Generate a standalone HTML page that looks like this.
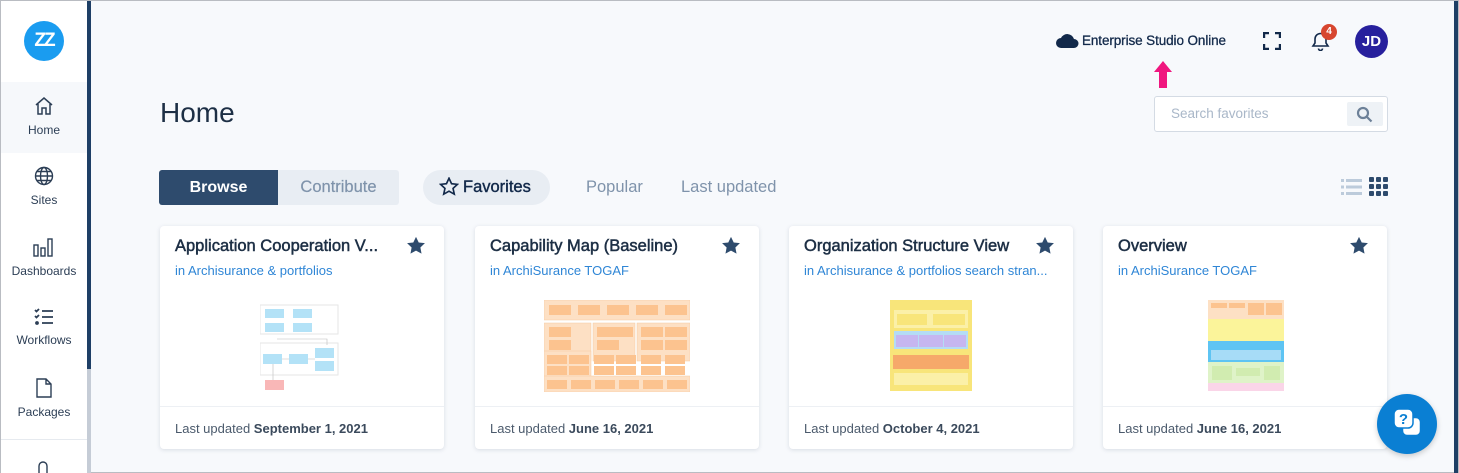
<!DOCTYPE html>
<html><head><meta charset="utf-8"><style>
*{box-sizing:border-box;margin:0;padding:0}
html{width:1459px;height:473px;overflow:hidden}
body{width:1459px;height:473px;overflow:hidden;background:#f7f9fc;font-family:"Liberation Sans",sans-serif;position:relative;border:1px solid #b9bcc2}
.side{position:absolute;left:0;top:0;width:86px;height:473px;background:#fff}
.bar{position:absolute;left:86px;top:0;width:4px;height:368px;background:#1e3f66}
.bar2{position:absolute;left:86px;top:368px;width:4px;height:110px;background:#c5ccd6}
.logo{position:absolute;left:23px;top:20px;width:40px;height:40px;border-radius:50%;background:#1a9cf0;color:#fff;font-weight:bold;font-size:19px;text-align:center;line-height:40px;letter-spacing:-2px}
.nav{position:absolute;left:0;width:86px;text-align:center;font-size:12px;color:#2c3e55}
.nav svg{display:block;margin:0 auto 7px}
.abs{position:absolute}
.card{position:absolute;top:225px;width:284px;height:223px;background:#fff;border-radius:4px;box-shadow:0 1px 4px rgba(40,60,90,.15)}
.card h3{position:absolute;left:15px;top:11px;font-size:16.5px;font-weight:normal;color:#1d2f45;white-space:nowrap;-webkit-text-stroke:.5px #1d2f45}
.card .in{position:absolute;left:15px;top:37px;font-size:13px;color:#2f86d6;white-space:nowrap}
.card .star{position:absolute;right:18px;top:10px}
.card .foot{position:absolute;left:0;right:0;top:180px;height:43px;border-top:1px solid #edf0f4;font-size:13px;color:#4b5a6c;padding:14px 15px}
.card .foot b{color:#3b4a5c}
.thumb{position:absolute}
</style></head><body>
<div class="side">
<div class="logo">ZZ</div>
<div class="abs" style="left:0;top:81px;width:86px;height:71px;background:#f6f8fb"></div>
<div class="nav" style="top:95px"><svg width="20" height="20" viewBox="0 0 20 20" fill="none" stroke="#2c3e55" stroke-width="1.5"><path d="M2 9L10 2l8 7M4 8v10h4v-6h4v6h4V8"/></svg>Home</div>
<div class="nav" style="top:165px"><svg width="20" height="20" viewBox="0 0 20 20" fill="none" stroke="#2c3e55" stroke-width="1.4"><circle cx="10" cy="10" r="8.5"/><ellipse cx="10" cy="10" rx="3.5" ry="8.5"/><path d="M1.5 10h17M3 5.5h14M3 14.5h14"/></svg>Sites</div>
<div class="nav" style="top:236px"><svg width="22" height="20" viewBox="0 0 22 20" fill="none" stroke="#2c3e55" stroke-width="1.4"><rect x="1" y="8" width="4" height="11"/><rect x="8" y="11" width="4" height="8"/><rect x="15" y="2" width="4" height="17"/></svg>Dashboards</div>
<div class="nav" style="top:307px"><svg width="20" height="18" viewBox="0 0 20 18" fill="none" stroke="#2c3e55" stroke-width="1.8"><path d="M1 2l1.5 1.5L5 1M1 8l1.5 1.5L5 7M8 3h11M8 9h11M8 15h11"/><circle cx="3" cy="15" r="1" fill="#2c3e55"/></svg>Workflows</div>
<div class="nav" style="top:377px"><svg width="16" height="20" viewBox="0 0 16 20" fill="none" stroke="#2c3e55" stroke-width="1.4"><path d="M1 1h9l5 5v13H1zM10 1v5h5"/></svg>Packages</div>
<div class="abs" style="left:0;top:438px;width:86px;height:1px;background:#e6eaef"></div>
<svg class="abs" style="left:33px;top:458px" width="18" height="15" viewBox="0 0 18 15" fill="none" stroke="#2c3e55" stroke-width="1.4"><path d="M5 15V7a4 4 0 0 1 8 0v8"/></svg>
</div>
<div class="bar"></div><div class="bar2"></div>
<div class="abs" style="left:1453px;top:0;width:4px;height:473px;background:#1e3f66"></div>

<svg class="abs" style="left:1055px;top:31px" width="23" height="16" viewBox="0 0 23 16"><path d="M5 16a5 5 0 0 1 0-10 7 7 0 0 1 13 1 4.5 4.5 0 0 1 0 9z" fill="#12294a"/></svg>
<div class="abs" style="left:1081px;top:32px;font-size:13.5px;color:#12294a;-webkit-text-stroke:.3px #12294a;letter-spacing:-.1px">Enterprise Studio Online</div>
<svg class="abs" style="left:1153px;top:60px" width="18" height="27" viewBox="0 0 18 27"><path d="M9 0L18 11H13V27H5V11H0z" fill="#f0167f"/></svg>
<svg class="abs" style="left:1262px;top:31px" width="18" height="18" viewBox="0 0 18 18" fill="none" stroke="#12294a" stroke-width="2.4"><path d="M1 6V1h5M12 1h5v5M17 12v5h-5M6 17H1v-5"/></svg>
<svg class="abs" style="left:1310px;top:30px" width="19" height="20" viewBox="0 0 19 20" fill="none" stroke="#12294a" stroke-width="1.6"><path d="M2 15h15l-2-3V8a5.5 5.5 0 0 0-11 0v4zM7.5 17.5a2 2 0 0 0 4 0"/></svg>
<div class="abs" style="left:1320px;top:23px;width:16px;height:16px;border-radius:50%;background:#d7462f;color:#fff;font-size:10px;font-weight:bold;text-align:center;line-height:16px">4</div>
<div class="abs" style="left:1354px;top:24px;width:33px;height:33px;border-radius:50%;background:#27209d;color:#fff;font-size:15px;font-weight:bold;text-align:center;line-height:33px">JD</div>

<div class="abs" style="left:159px;top:96px;font-size:28px;color:#1d2f45">Home</div>
<div class="abs" style="left:1153px;top:95px;width:234px;height:36px;background:#fff;border:1px solid #d4dbe4;border-radius:3px"></div>
<div class="abs" style="left:1170px;top:105px;font-size:13.5px;color:#a9b7c8">Search favorites</div>
<div class="abs" style="left:1346px;top:101px;width:36px;height:24px;background:#eef2f6;border-radius:2px"></div>
<svg class="abs" style="left:1355px;top:105px" width="17" height="17" viewBox="0 0 17 17" fill="none" stroke="#6d8198" stroke-width="2.2"><circle cx="7" cy="7" r="5"/><path d="M10.5 10.5L15.5 15.5"/></svg>

<div class="abs" style="left:158px;top:169px;width:240px;height:35px;background:#e8edf3;border-radius:3px"></div>
<div class="abs" style="left:158px;top:169px;width:119px;height:35px;background:#2e4b6d;border-radius:3px 0 0 3px;color:#fff;font-size:16px;font-weight:bold;text-align:center;line-height:35px">Browse</div>
<div class="abs" style="left:277px;top:169px;width:121px;height:35px;color:#7f93ab;font-size:16.5px;text-align:center;line-height:35px;-webkit-text-stroke:.2px #7f93ab">Contribute</div>
<div class="abs" style="left:422px;top:169px;width:127px;height:35px;background:#e8edf3;border-radius:18px"></div>
<svg class="abs" style="left:438px;top:176px" width="20" height="19" viewBox="0 0 24 23" fill="none" stroke="#12294a" stroke-width="2"><path d="M12 1.5l3.1 6.6 7.1.8-5.3 4.9 1.5 7-6.4-3.6-6.4 3.6 1.5-7L1.8 8.9l7.1-.8z"/></svg>
<div class="abs" style="left:462px;top:177px;font-size:16.5px;color:#12294a;-webkit-text-stroke:.4px #12294a">Favorites</div>
<div class="abs" style="left:585px;top:177px;font-size:16.5px;color:#7f93ab">Popular</div>
<div class="abs" style="left:680px;top:177px;font-size:16.5px;color:#7f93ab">Last updated</div>
<svg class="abs" style="left:1340px;top:177px" width="22" height="18" viewBox="0 0 22 18" fill="#bccbdb"><rect x="0" y="1" width="3" height="3"/><rect x="5" y="1" width="16" height="3"/><rect x="0" y="7.5" width="3" height="3"/><rect x="5" y="7.5" width="16" height="3"/><rect x="0" y="14" width="3" height="3"/><rect x="5" y="14" width="16" height="3"/></svg>
<svg class="abs" style="left:1368px;top:176px" width="19" height="19" viewBox="0 0 19 19" fill="#2e4b6d"><rect x="0" y="0" width="5" height="5" rx="1"/><rect x="7" y="0" width="5" height="5" rx="1"/><rect x="14" y="0" width="5" height="5" rx="1"/><rect x="0" y="7" width="5" height="5" rx="1"/><rect x="7" y="7" width="5" height="5" rx="1"/><rect x="14" y="7" width="5" height="5" rx="1"/><rect x="0" y="14" width="5" height="5" rx="1"/><rect x="7" y="14" width="5" height="5" rx="1"/><rect x="14" y="14" width="5" height="5" rx="1"/></svg>

<div class="card" style="left:159px">
<h3>Application Cooperation V...</h3><div class="in">in Archisurance &amp; portfolios</div>
<svg class="star" width="20" height="19" viewBox="0 0 24 23"><path d="M12 1l3.3 6.8 7.5.9-5.5 5.2 1.4 7.4L12 17.7l-6.7 3.6 1.4-7.4L1.2 8.7l7.5-.9z" fill="#2e4b6d"/></svg>
<svg class="thumb" style="left:100px;top:73px" width="84" height="96" viewBox="0 0 84 96"><rect x="0" y="6" width="78" height="29" fill="none" stroke="#e6e6e6"/><rect x="5" y="10" width="19" height="9" fill="#b3e2f7"/><rect x="33" y="10" width="19" height="9" fill="#b3e2f7"/><rect x="5" y="24" width="19" height="9" fill="#b3e2f7"/><rect x="33" y="24" width="19" height="9" fill="#b3e2f7"/><rect x="0" y="44" width="78" height="32" fill="none" stroke="#e6e6e6"/><rect x="3" y="55" width="19" height="10" fill="#b3e2f7"/><rect x="29" y="55" width="19" height="10" fill="#b3e2f7"/><rect x="55" y="49" width="19" height="10" fill="#b3e2f7"/><rect x="55" y="62" width="19" height="10" fill="#b3e2f7"/><rect x="5" y="81" width="19" height="10" fill="#f9b7b7"/><path d="M13 65v16M22 60h7M48 60h7M17 40h50V46" stroke="#bbb" fill="none" stroke-width=".6"/></svg>
<div class="foot">Last updated <b>September 1, 2021</b></div></div>

<div class="card" style="left:474px">
<h3>Capability Map (Baseline)</h3><div class="in">in ArchiSurance TOGAF</div>
<svg class="star" width="20" height="19" viewBox="0 0 24 23"><path d="M12 1l3.3 6.8 7.5.9-5.5 5.2 1.4 7.4L12 17.7l-6.7 3.6 1.4-7.4L1.2 8.7l7.5-.9z" fill="#2e4b6d"/></svg>
<svg class="thumb" style="left:69px;top:74px" width="146" height="92" viewBox="0 0 146 92"><g fill="#fde0c4" stroke="#f6c9a0" stroke-width=".5"><rect x="0" y="0" width="146" height="20"/><rect x="0" y="23" width="47" height="38"/><rect x="49" y="23" width="42" height="38"/><rect x="93" y="23" width="53" height="38"/><rect x="0" y="51" width="47" height="40"/><rect x="0" y="76" width="146" height="16"/></g><g fill="#fcc38f"><rect x="5" y="5" width="22" height="10"/><rect x="34" y="5" width="22" height="10"/><rect x="63" y="5" width="22" height="10"/><rect x="92" y="5" width="22" height="10"/><rect x="121" y="5" width="22" height="10"/><rect x="5" y="27" width="22" height="10"/><rect x="5" y="40" width="22" height="10"/><rect x="53" y="27" width="22" height="10"/><rect x="53" y="40" width="22" height="10"/><rect x="75" y="27" width="14" height="10"/><rect x="97" y="27" width="22" height="10"/><rect x="121" y="27" width="22" height="10"/><rect x="97" y="40" width="22" height="10"/><rect x="121" y="40" width="22" height="10"/><rect x="3" y="55" width="20" height="9"/><rect x="25" y="55" width="20" height="9"/><rect x="3" y="66" width="20" height="9"/><rect x="25" y="66" width="20" height="9"/><rect x="50" y="55" width="20" height="9"/><rect x="72" y="55" width="20" height="9"/><rect x="50" y="66" width="20" height="9"/><rect x="72" y="66" width="20" height="9"/><rect x="97" y="55" width="20" height="9"/><rect x="121" y="55" width="20" height="9"/><rect x="97" y="66" width="20" height="9"/><rect x="121" y="66" width="20" height="9"/><rect x="3" y="80" width="20" height="9"/><rect x="27" y="80" width="20" height="9"/><rect x="51" y="80" width="20" height="9"/><rect x="75" y="80" width="20" height="9"/><rect x="99" y="80" width="20" height="9"/><rect x="123" y="80" width="20" height="9"/></g></svg>
<div class="foot">Last updated <b>June 16, 2021</b></div></div>

<div class="card" style="left:788px">
<h3>Organization Structure View</h3><div class="in">in Archisurance &amp; portfolios search stran...</div>
<svg class="star" width="20" height="19" viewBox="0 0 24 23"><path d="M12 1l3.3 6.8 7.5.9-5.5 5.2 1.4 7.4L12 17.7l-6.7 3.6 1.4-7.4L1.2 8.7l7.5-.9z" fill="#2e4b6d"/></svg>
<svg class="thumb" style="left:101px;top:74px" width="82" height="91" viewBox="0 0 82 91"><rect width="82" height="91" fill="#f8e57a"/><rect x="4" y="10" width="74" height="18" fill="#fbf0a8"/><rect x="7" y="14" width="30" height="11" fill="#f8e57a"/><rect x="43" y="14" width="32" height="11" fill="#f8e57a"/><rect x="4" y="31" width="74" height="18" fill="#b4dcf5"/><rect x="6" y="35" width="22" height="12" fill="#c6b6f0"/><rect x="29" y="35" width="24" height="12" fill="#c6b6f0"/><rect x="54" y="35" width="22" height="12" fill="#c6b6f0"/><rect x="3" y="55" width="76" height="14" fill="#f6a96a"/><rect x="4" y="73" width="74" height="12" fill="#fbf0a8"/></svg>
<div class="foot">Last updated <b>October 4, 2021</b></div></div>

<div class="card" style="left:1102px">
<h3>Overview</h3><div class="in">in ArchiSurance TOGAF</div>
<svg class="star" width="20" height="19" viewBox="0 0 24 23"><path d="M12 1l3.3 6.8 7.5.9-5.5 5.2 1.4 7.4L12 17.7l-6.7 3.6 1.4-7.4L1.2 8.7l7.5-.9z" fill="#2e4b6d"/></svg>
<svg class="thumb" style="left:105px;top:74px" width="76" height="91" viewBox="0 0 76 91"><rect y="0" width="76" height="19" fill="#fde0c4"/><rect x="3" y="3" width="16" height="5" fill="#fcc38f"/><rect x="21" y="3" width="16" height="5" fill="#fcc38f"/><rect x="40" y="3" width="16" height="12" fill="#fcc38f"/><rect x="58" y="3" width="16" height="12" fill="#fcc38f"/><rect y="19" width="76" height="22" fill="#fbf49a"/><rect y="41" width="76" height="21" fill="#5ec4f3"/><rect x="3" y="50" width="70" height="10" fill="#a7dcf7"/><rect y="62" width="76" height="21" fill="#dff3c8"/><rect x="4" y="66" width="20" height="14" fill="#d1ecb0"/><rect x="28" y="68" width="24" height="8" fill="#d1ecb0"/><rect x="56" y="66" width="16" height="14" fill="#d1ecb0"/><rect y="83" width="76" height="8" fill="#fad5e8"/></svg>
<div class="foot">Last updated <b>June 16, 2021</b></div></div>

<div class="abs" style="left:1376px;top:393px;width:60px;height:60px;border-radius:50%;background:#0a7fd3;box-shadow:0 2px 6px rgba(0,0,0,.2)"></div>
<svg class="abs" style="left:1390px;top:406px" width="34" height="34" viewBox="0 0 34 34"><rect x="11" y="10" width="19" height="19" rx="5" fill="#fff" stroke="#0a7fd3" stroke-width="2.5"/><rect x="3" y="2" width="19" height="19" rx="5" fill="#fff" stroke="#0a7fd3" stroke-width="1.5"/><text x="12.5" y="17" font-size="15" font-weight="bold" fill="#0a7fd3" text-anchor="middle" font-family="Liberation Sans">?</text></svg>
</body></html>
